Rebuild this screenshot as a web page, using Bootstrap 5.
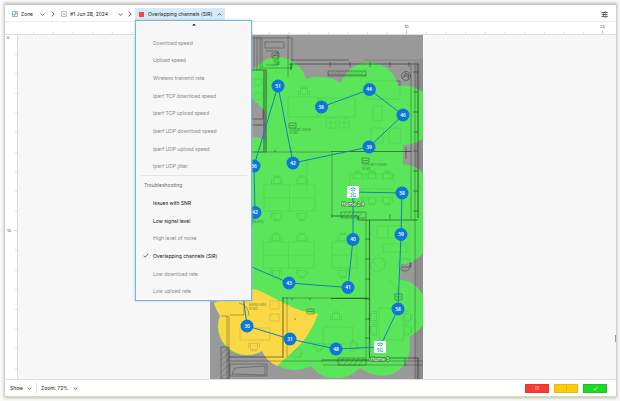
<!DOCTYPE html>
<html lang="en">
<head>
<meta charset="utf-8">
<meta name="viewport" content="width=device-width, initial-scale=1">
<title>Zone survey</title>
<link href="https://cdn.jsdelivr.net/npm/bootstrap@5.3.0/dist/css/bootstrap.min.css" rel="stylesheet">
<style>
html,body{height:100%}
body{background:#fafafa;font-family:Inter,"Open Sans",sans-serif;font-size:5px;line-height:8px;color:#222;padding:4px 4px 4px 5px;overflow:hidden}
svg{display:block;flex:none}
.window{background:#fff;border-top:1px solid #c4c4c4;border-bottom:1px solid #cfe3a0;box-shadow:0 0 3px 1px #b8b8b8}
.toolbar{flex:none;height:17px;padding:3px 8px 1px 7px;border-bottom:1px solid #ececec}
.crumb{border:0;background:none;padding:0;color:inherit;display:flex;align-items:center;height:12px;white-space:nowrap}
.crumb-zone{width:33px;gap:3px}
.crumb-date{width:62px;gap:3px}
.crumb-sep{width:16px}
.crumb-sep-last{width:12px;padding-left:5px}
.crumb-layer{width:90px;gap:4px;padding:0 3px 0 4px;background:#d5e9f8}
.swatch{flex:none;width:5px;height:5px;background:#f4483f}
.layers{position:absolute;top:100%;left:0;width:117px;height:281px;background:#f7f7f7;border:1px solid #7db3d3;box-shadow:0 0 2px #9cc7e0;z-index:10}
.layers ul{display:contents;list-style:none}
.layers li{flex:1 1 0;display:flex;align-items:center}
.layers button{border:0;background:none;padding:0 0 0 7px;width:100%;display:flex;align-items:center;text-align:left;color:#111;line-height:8px}
.layers button:disabled{color:#888}
.tickbox{width:10px;flex:none}
.more{height:13px;padding-top:2px}
.group-title{height:19px;border-top:1px solid #e4e4e4;margin:0 4px;padding:0 4px;color:#666;display:flex;align-items:center}
.ruler-top{flex:none;height:13px;border-bottom:1px solid #dcdcdc}
.ruler-left{flex:none;width:13px;border-right:1px solid #dcdcdc}
.ruler-top svg,.ruler-left svg{width:100%;height:100%}
.workspace{flex:1 1 0;min-height:0}
.stage{background:#f7f7f7;position:relative;padding-right:2px}
.plan{height:100%;width:auto}
.scroll-thumb{position:absolute;right:0;top:300px;width:1px;height:7px;background:#999}
.status{flex:none;height:17px;border-top:1px solid #e0e0e0;padding:0 9px 0 5px}
.status .crumb{justify-content:space-between}
.show-menu{width:22px}
.zoom-menu{width:37px}
.rule-v{width:1px;height:10px;background:#ddd;margin:0 4px}
.lamps{gap:5px}
.lamp{border:1px solid;width:24px;height:9px;padding:0;display:flex;align-items:center;justify-content:center}
.lamp-red{background:#fd3a2d;border-color:#dc3a30}
.lamp-amber{background:#fecb06;border-color:#e0b828}
.lamp-green{background:#18db22;border-color:#2cb932}
.map-text{font-size:5px;fill:#fff;text-anchor:middle;font-family:"Open Sans",sans-serif;font-weight:600}
.ap-text{fill:#16a99a}
.tick-text{font-size:4px;fill:#555;text-anchor:middle}
.room-text{font-size:3px;fill:#174a17;opacity:.6}
</style>
</head>
<body>
<svg width="0" height="0" class="position-absolute" aria-hidden="true">
<symbol id="down" viewBox="0 0 5 5"><path d="M.7 1.5 2.5 3.4 4.3 1.5" fill="none" stroke="#444" stroke-width=".8"/></symbol>
<symbol id="up" viewBox="0 0 5 5"><path d="M.7 3.4 2.5 1.6 4.3 3.4" fill="none" stroke="#444" stroke-width=".8"/></symbol>
<symbol id="next" viewBox="0 0 4 6"><path d="M.8.6 3.2 3 .8 5.4" fill="none" stroke="#333" stroke-width=".8"/></symbol>
</svg>
<div class="window d-flex flex-column h-100">
  <header class="toolbar d-flex align-items-center">
    <button class="crumb crumb-zone" type="button">
      <svg width="6" height="6" viewBox="0 0 6 6" fill="none" stroke="#6e93b8" stroke-width=".7"><path d="M.5.5h5v5h-5zM.5 3.5h2v2M3 1.8h1.3v1.5H3z"/></svg>
      <span>Zone</span><svg class="ms-auto" width="5" height="5"><use href="#down"/></svg>
    </button>
    <span class="crumb-sep d-flex justify-content-center"><svg width="4" height="6"><use href="#next"/></svg></span>
    <button class="crumb crumb-date" type="button">
      <svg width="6" height="6" viewBox="0 0 6 6" fill="none" stroke="#7e9fc0" stroke-width=".6"><path d="M.5.5h5v5h-5zM1.500 1.800 4.500 4.400M4.500 1.800 1.500 4.400"/></svg>
      <span>#1 Jun 28, 2024</span><svg class="ms-auto" width="5" height="5"><use href="#down"/></svg>
    </button>
    <span class="crumb-sep-last"><svg width="4" height="6"><use href="#next"/></svg></span>
    <div class="position-relative">
      <button class="crumb crumb-layer" type="button" aria-expanded="true">
        <span class="swatch"></span><span>Overlapping channels (SIR)</span><svg class="ms-auto" width="5" height="5"><use href="#up"/></svg>
      </button>
      <div class="layers d-flex flex-column">
        <div class="more d-flex justify-content-center"><svg width="4" height="3" viewBox="0 0 4 3"><path d="M0 2.5 2 .8 4 2.5z" fill="#111"/></svg></div>
        <ul>
          <li><button type="button" disabled><span class="tickbox"></span>Download speed</button></li>
          <li><button type="button" disabled><span class="tickbox"></span>Upload speed</button></li>
          <li><button type="button" disabled><span class="tickbox"></span>Wireless transmit rate</button></li>
          <li><button type="button" disabled><span class="tickbox"></span>Iperf TCP download speed</button></li>
          <li><button type="button" disabled><span class="tickbox"></span>Iperf TCP upload speed</button></li>
          <li><button type="button" disabled><span class="tickbox"></span>Iperf UDP download speed</button></li>
          <li><button type="button" disabled><span class="tickbox"></span>Iperf UDP upload speed</button></li>
          <li><button type="button" disabled><span class="tickbox"></span>Iperf UDP jitter</button></li>
        </ul>
        <div class="group-title">Troubleshooting</div>
        <ul>
          <li><button type="button"><span class="tickbox"></span>Issues with SNR</button></li>
          <li><button type="button"><span class="tickbox"></span>Low signal level</button></li>
          <li><button type="button" disabled><span class="tickbox"></span>High level of noise</button></li>
          <li><button type="button"><span class="tickbox"><svg width="6" height="5" viewBox="0 0 6 5"><path d="M.5 2.7 2 4.2 5.4.8" fill="none" stroke="#444" stroke-width=".8"/></svg></span>Overlapping channels (SIR)</button></li>
          <li><button type="button" disabled><span class="tickbox"></span>Low download rate</button></li>
          <li><button type="button" disabled><span class="tickbox"></span>Low upload rate</button></li>
        </ul>
      </div>
    </div>
    <button class="crumb ms-auto" type="button" aria-label="Display settings">
      <svg width="7" height="7" viewBox="0 0 7 7" fill="none" stroke="#333" stroke-width=".8"><path d="M.5 1.500H4M5 1.500h1.700M4.300.3v2.400M.5 3.600h1.400M3 3.600h3.700M2.500 2.400v2.400M.5 5.600h3.400M5 5.600h1.700M4.600 4.500v2.300"/></svg>
    </button>
  </header>
  <div class="ruler-top">
    <svg><defs><pattern id="tx" x="8.5" width="19.64" height="13" patternUnits="userSpaceOnUse"><path d="M.3 10v3" stroke="#ccc" stroke-width=".7"/></pattern></defs><rect x="20" width="100%" height="13" fill="url(#tx)"/><path d="M401.500 8v5M597.500 8v5" stroke="#ccc"/><text class="tick-text" x="401.500" y="6">10</text><text class="tick-text" x="597.500" y="6">20</text></svg>
  </div>
  <main class="workspace d-flex">
    <div class="ruler-left">
      <svg><defs><pattern id="ty" width="13" height="19.64" patternUnits="userSpaceOnUse"><path d="M10 19h3" stroke="#ccc" stroke-width=".7"/></pattern></defs><rect y="0" width="13" height="100%" fill="url(#ty)"/><path d="M8 195.500h5" stroke="#ddd"/><text class="tick-text" x="4" y="197">10</text><text class="tick-text" x="3" y="4">0</text></svg>
    </div>
    <div class="stage flex-fill d-flex justify-content-center">
      <svg class="plan" viewBox="210 35 213 344" role="img" aria-label="Floor plan with survey points">
        <defs>
          <g id="chair" fill="none" stroke="#222" stroke-width=".6"><path d="M-3.500-3.500h7v6h-7zM-5.500-2v5h2M5.500-2v5h-2M-3-5h6M-1.500-5v1.500M1.500-5v1.500"/></g>
          <g id="desks" fill="none" stroke="#222" stroke-width=".5"><path d="M0 0h51v26H0zM0 13h51M25.500 0v26"/></g>
        </defs>
        <rect x="210" y="35" width="214" height="345" fill="#999"/>
        <path d="M364 59h60v321h-9V61H364z" fill="#8d8d8d"/>
        <!-- furniture -->
        <g opacity=".9">
          <use href="#desks" x="264" y="185"/><use href="#chair" x="277" y="181"/><use href="#chair" x="302" y="181"/><use href="#chair" transform="translate(277 216) rotate(180)"/><use href="#chair" transform="translate(302 216) rotate(180)"/>
          <use href="#desks" x="263" y="242"/><use href="#chair" x="276" y="238"/><use href="#chair" x="302" y="238"/><use href="#chair" transform="translate(276 273) rotate(180)"/><use href="#chair" transform="translate(302 273) rotate(180)"/>
          <g fill="none" stroke="#222" stroke-width=".5">
            <path d="M332 242h25v26h-25zM332 255h25M288 97h30v20h-30zM318 98h37v19h-37zM320 98v19M326 98v19M366 81h34v18h-34zM373 106h9v15h-9zM326 118h10v10h-10zM339 118h10v10h-10zM326 123h10M339 123h10M331 118v10M344 118v10M371 128h12v15h-12zM389 128h12v15h-12zM350 174h44v15h-44z"/>
            <path d="M377 226h26v12h-26zM388 226v12M383 244h24v8h-24zM379 308h24v32h-24zM240 328h30v12h-30zM323 327h30v17h-30zM270 301h9v8h-9zM270 314h9v7h-9zM252 79h11v40h-11zM291 60h58M267 73v28M307 160v30"/>
            <circle cx="378" cy="265" r="7"/><circle cx="405" cy="265" r="6"/><path d="M372 260l6-6 9 8-7 8zM399 258h11v9h-11zM389 280q15 9 5 18"/>
            <circle cx="258" cy="82" r="4"/><circle cx="258" cy="96" r="4"/>
          </g>
          <g><use href="#chair" x="304" y="92"/><use href="#chair" x="358" y="176"/><use href="#chair" x="372" y="176"/><use href="#chair" x="387" y="176"/><use href="#chair" transform="translate(358 200) rotate(180)"/><use href="#chair" transform="translate(372 200) rotate(180)"/><use href="#chair" transform="translate(387 200) rotate(180)"/><use href="#chair" x="343" y="238"/><use href="#chair" transform="translate(343 273) rotate(180)"/><use href="#chair" transform="translate(254 346) rotate(180)"/><use href="#chair" x="336" y="317"/><use href="#chair" transform="translate(297 353) rotate(120)"/><use href="#chair" transform="translate(319 346) rotate(180)"/><use href="#chair" transform="translate(353 346) rotate(90)"/><use href="#chair" transform="translate(374 317) rotate(-90)"/><use href="#chair" transform="translate(407 317) rotate(90)"/><use href="#chair" transform="translate(374 330) rotate(-90)"/><use href="#chair" transform="translate(407 330) rotate(90)"/></g>
        </g>
        <!-- signal coverage -->
        <path fill="#4bf84b" opacity=".8" d="M266 112 252 98V73A29 29 0 0 1 306 79Q314 76 321 77Q333 77 341 83A29.500 29.500 0 0 1 398 86Q411 83 424 93V138Q414 145 403 145V164Q416 165 424 174V252Q415 264 401 264L400 280Q415 280 425 298V322Q419 332 409 337Q413 360 398 371Q380 382 360 368Q348 380 330 378Q319 376 311 366Q295 374 278 366L262 351A29 29 0 0 1 220 315Q216 310 214 303L228 290 252 289V138Q259 136 266 140Z"/>
        <path d="M214 303 252 289Q258 289 266 294L286 304Q300 312 318 314Q310 335 298 347L277 366Q266 361 262 351A29 29 0 0 1 220 316Q216 310 214 303Z" fill="#ffd745" opacity=".97"/>
        <g opacity=".2"><use href="#chair" transform="translate(254 346) rotate(180)"/><path d="M240 328h30v12h-30zM270 301h9v8h-9zM270 314h9v7h-9z" fill="none" stroke="#222" stroke-width=".6"/></g>
        <!-- walls -->
        <g fill="none" stroke="#111">
          <g stroke-width="1.200" opacity=".5"><path d="M252 70h14v82h-14M264 70v82M252 125h13M289 64h130M418 64v154M291 64v6M331 151.500h81M331 216h27v4h60M369.500 220v138M331 298.500h36M323 360h46M283 297v61M229 357h54M369 358h49v22"/></g>
          <g stroke-width=".6" opacity=".5"><path d="M254 37v30M257 37v33M260 37v33M252 38h40v30h-30V38M265 42h19v6h-19zM266 51h12v14h-12M272 58l6-6M288 35v42M411 65v154M415 65v315M332 152v66M366 220v138M341 212h25v6h-25zM328 75h38M328 71h38v5h-38zM283 298h86M267 152h64M227 316v63M229 316v63M221 316h7M221 347h8v32h-8zM230 364h37v12h-37zM232 374l3-6 30-2v9zM229 361h194M338 358h28v7h-28zM323 365h100M322 358v4M287 297v60M252 292h-8v23h-14M239 303q10 2 10 13"/></g>
          <g stroke-width=".5" opacity=".4"><path d="M328 75l3-4m0 4 3-4m0 4 3-4m0 4 3-4m0 4 3-4m0 4 3-4m0 4 3-4m0 4 3-4m0 4 3-4m0 4 3-4m0 4 3-4m0 4 3-4M342 218l4-6m0 6 4-6m0 6 4-6m0 6 4-6m0 6 4-6M339 365l5-7m0 7 5-7m0 7 5-7m0 7 5-7m0 7 5-7M221 354l8-7M221 360l8-7M221 366l8-7M221 372l8-7M221 378l8-7"/></g>
          <g stroke-width=".8" opacity=".5"><path d="M330 62v5M350 62v5M370 62v5M390 62v5M409 62v5M413 72h5M413 92h5M413 112h5M413 132h5M413 151h5M413 171h5M413 191h5M413 211h5M390 214v5M365 239h5M365 259h5M365 279h5M365 299h5M365 319h5M365 338h5M406 147v12M405 359v7M274 151h2M290 151h2M291 299h2M309 299h2M294 319h2"/></g>
          <g opacity=".55"><circle cx="406" cy="76" r="4.500" stroke-width=".7"/><path d="M403.500 78l2-5 3.500 2-1 4M404 76h5" stroke-width=".8"/></g>
        </g>
        <g class="room-text" aria-hidden="true"><path d="M289 123h7v5h-7zM362 158h7v5h-7zM395 294h7v6h-7zM307 309h7v5h-7zM272 53h7v5h-7zM290 125.500h5M363 160.500h5M396 297h5M308 311.500h5M273 55.500h5" fill="none" stroke="#174a17" stroke-width=".7"/><text x="289" y="131">TÖREBÖ ODASI</text><text x="289" y="134">30 M2</text><text x="362" y="166">TOPLANTI ODASI</text><text x="362" y="170">16 M2</text><text x="249" y="306">KARŞILAMA</text><text x="249" y="310">10 M2</text><text x="273" y="62">WC</text><text x="273" y="65">3 M2</text><text x="254" y="223">K.OFİS</text></g>
        <!-- walking path -->
        <path d="M321.500 107 369.500 89.500 403 115 369 147 293 163 278 86 254 166 255 212 250 232 238 261 289 283 348 287.500 353 239.500V192L402 193 401 234.500 398 309 380 347 336 349 290 339 247 326 243 295" fill="none" stroke="#0f84b4" stroke-width="1"/>
        <g fill="#0b78d7"><circle cx="278" cy="86" r="6.500"/><circle cx="321.500" cy="107" r="6.500"/><circle cx="369.500" cy="89.500" r="6.500"/><circle cx="403" cy="115" r="6.500"/><circle cx="369" cy="147" r="6.500"/><circle cx="293" cy="163" r="6.500"/><circle cx="254" cy="166" r="6.500"/><circle cx="255" cy="212.500" r="6.500"/><circle cx="353" cy="239.500" r="6.500"/><circle cx="402" cy="193" r="6.500"/><circle cx="401" cy="234.500" r="6.500"/><circle cx="348" cy="287.500" r="6.500"/><circle cx="289" cy="283" r="6.500"/><circle cx="247" cy="326" r="6.500"/><circle cx="290" cy="339" r="6.500"/><circle cx="336" cy="349" r="6.500"/><circle cx="398" cy="309" r="6.500"/></g>
        <g class="map-text"><text x="278" y="88">51</text><text x="321" y="109">38</text><text x="369" y="91">44</text><text x="403" y="117">46</text><text x="369" y="149">39</text><text x="293" y="165">42</text><text x="254" y="168">36</text><text x="255" y="214">42</text><text x="353" y="241">40</text><text x="402" y="195">58</text><text x="401" y="236">59</text><text x="348" y="289">41</text><text x="289" y="285">43</text><text x="247" y="328">30</text><text x="290" y="341">31</text><text x="336" y="351">48</text><text x="398" y="311">58</text>
        <text x="353" y="206" stroke="#246b24" stroke-width="1" paint-order="stroke">Home 2.4</text><text x="380" y="361" stroke="#246b24" stroke-width="1" paint-order="stroke">Home 5</text></g>
        <g id="access-points"><rect x="347" y="186" width="12" height="12" rx="1" fill="#fff"/><rect x="374" y="341" width="12" height="12" rx="1" fill="#fff"/>
          <g fill="none" stroke="#16a99a" stroke-width=".9"><path id="wifi" d="M349.800 189.200q3.200-2.600 6.400 0M351 190.700q2-1.600 4 0M352.500 192h1"/><use href="#wifi" x="27" y="155"/></g>
          <g class="map-text"><text class="ap-text" x="353" y="197">2G</text><text class="ap-text" x="380" y="352">5G</text></g></g>
      </svg>
      <span class="scroll-thumb"></span>
    </div>
  </main>
  <footer class="status d-flex align-items-center">
    <button class="crumb show-menu" type="button"><span>Show</span><svg width="5" height="5"><use href="#down"/></svg></button>
    <span class="rule-v"></span>
    <button class="crumb zoom-menu" type="button"><span>Zoom: 72%</span><svg width="5" height="5"><use href="#down"/></svg></button>
    <div class="lamps d-flex ms-auto">
      <button class="lamp lamp-red" type="button" aria-label="Poor"><svg width="4" height="4" viewBox="0 0 4 4"><path d="M.4.4h3.200v3.200H.4zM2 .4v3.200M.4 2h3.200" fill="none" stroke="#d99" stroke-width=".7"/></svg></button>
      <button class="lamp lamp-amber" type="button" aria-label="Fair"><svg width="3" height="5" viewBox="0 0 3 5"><path d="M1.500.3v3M1.500 4v.8" stroke="#c9a640" stroke-width="1"/></svg></button>
      <button class="lamp lamp-green" type="button" aria-label="Good"><svg width="5" height="5" viewBox="0 0 5 5"><path d="M.6 2.700 2 4.200 4.500.7" fill="none" stroke="#bdeec0" stroke-width=".8"/></svg></button>
    </div>
  </footer>
</div>
<script src="https://cdn.jsdelivr.net/npm/bootstrap@5.3.0/dist/js/bootstrap.bundle.min.js"></script>
</body>
</html>
